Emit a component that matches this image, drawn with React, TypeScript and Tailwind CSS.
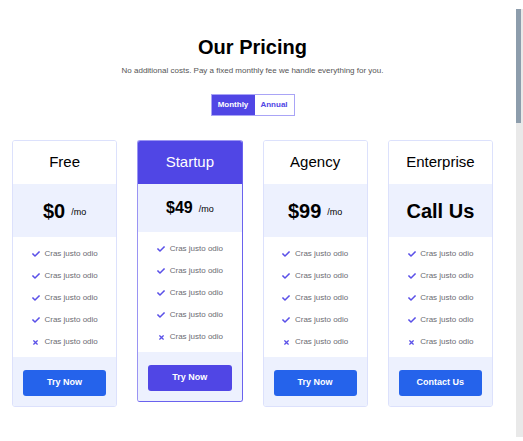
import { FaCheck, FaTimes } from "react-icons/fa";

type Plan = {
  name: string;
  price: string;
  per?: string;
  cta: string;
  featured?: boolean;
};

const plans: Plan[] = [
  { name: "Free", price: "$0", per: "/mo", cta: "Try Now" },
  { name: "Startup", price: "$49", per: "/mo", cta: "Try Now", featured: true },
  { name: "Agency", price: "$99", per: "/mo", cta: "Try Now" },
  { name: "Enterprise", price: "Call Us", cta: "Contact Us" },
];

const features = [true, true, true, true, false];

function PlanCard({ plan }: { plan: Plan }) {
  const featured = plan.featured;
  return (
    <div
      className={
        featured
          ? "flex-1 rounded-[3px] border border-[#9a94f3] border-r-[#6a62ee] border-b-[#6a62ee] overflow-hidden"
          : "flex-1 rounded-[3px] border border-[#dce1fc] overflow-hidden"
      }
    >
      <div
        className={
          featured
            ? "h-[43px] flex items-center justify-center bg-[#5046e5] text-white text-[15px]"
            : "h-[43px] flex items-center justify-center bg-white text-black text-[15px]"
        }
      >
        {plan.name}
      </div>
      <div
        className={
          featured
            ? "h-[48px] flex items-center justify-center bg-[#edf1fe]"
            : "h-[53px] flex items-center justify-center bg-[#edf1fe]"
        }
      >
        <span
          className={
            featured
              ? "text-[16px] font-bold text-black"
              : "text-[20px] font-bold text-black"
          }
        >
          {plan.price}
        </span>
        {plan.per && <span className="ml-[6px] mt-[4px] text-[9px] text-black">{plan.per}</span>}
      </div>
      <ul className="bg-white pt-[6px] pb-[4px]">
        {features.map((ok, i) => (
          <li key={i} className="h-[22px] flex items-center justify-center gap-[4px] text-[8px] text-[#6b6b72]">
            <span className="w-[9px] flex justify-center text-[#5a50e8]">
              {ok ? <FaCheck size={8} /> : <FaTimes size={7} />}
            </span>
            Cras justo odio
          </li>
        ))}
      </ul>
      <div className="bg-[#edf1fe] px-[10px] pt-[11px] pb-[10px]">
        <button
          className={
            featured
              ? "w-full h-[26px] rounded-[3px] bg-[#5046e5] text-white text-[9px] font-bold"
              : "w-full h-[26px] rounded-[3px] bg-[#2563eb] text-white text-[9px] font-bold"
          }
        >
          {plan.cta}
        </button>
      </div>
    </div>
  );
}

export default function App() {
  return (
    <div className="min-h-screen bg-white font-['Liberation_Sans',Arial,sans-serif]">
      <div className="w-[505px] px-3 pt-[36px] pb-10">
        <h1 className="text-center text-[20px] leading-[22px] font-bold text-black">Our Pricing</h1>
        <p className="mt-[9px] text-center text-[8px] leading-[8px] text-[#555]">
          No additional costs. Pay a fixed monthly fee we handle everything for you.
        </p>

        <div className="mt-[19px] flex justify-center">
          <div className="flex h-[22px] border border-[#a9a4f6]">
            <button className="w-[43px] bg-[#5046e5] text-white text-[8px] font-bold">Monthly</button>
            <button className="w-[39px] bg-white text-[#5046e5] text-[8px] font-bold">Annual</button>
          </div>
        </div>

        <div className="mt-[24px] flex items-start gap-5">
          {plans.map((p) => (
            <PlanCard key={p.name} plan={p} />
          ))}
        </div>
      </div>

      {/* scrollbar */}
      <div className="fixed right-0 top-0 bottom-0 w-[7px] pt-[9px] pb-[4px] bg-white">
        <div className="h-full bg-[#e9e9e9] pr-[2px]">
          <div className="h-[114px] bg-[#8d9dac]" />
        </div>
      </div>
    </div>
  );
}
